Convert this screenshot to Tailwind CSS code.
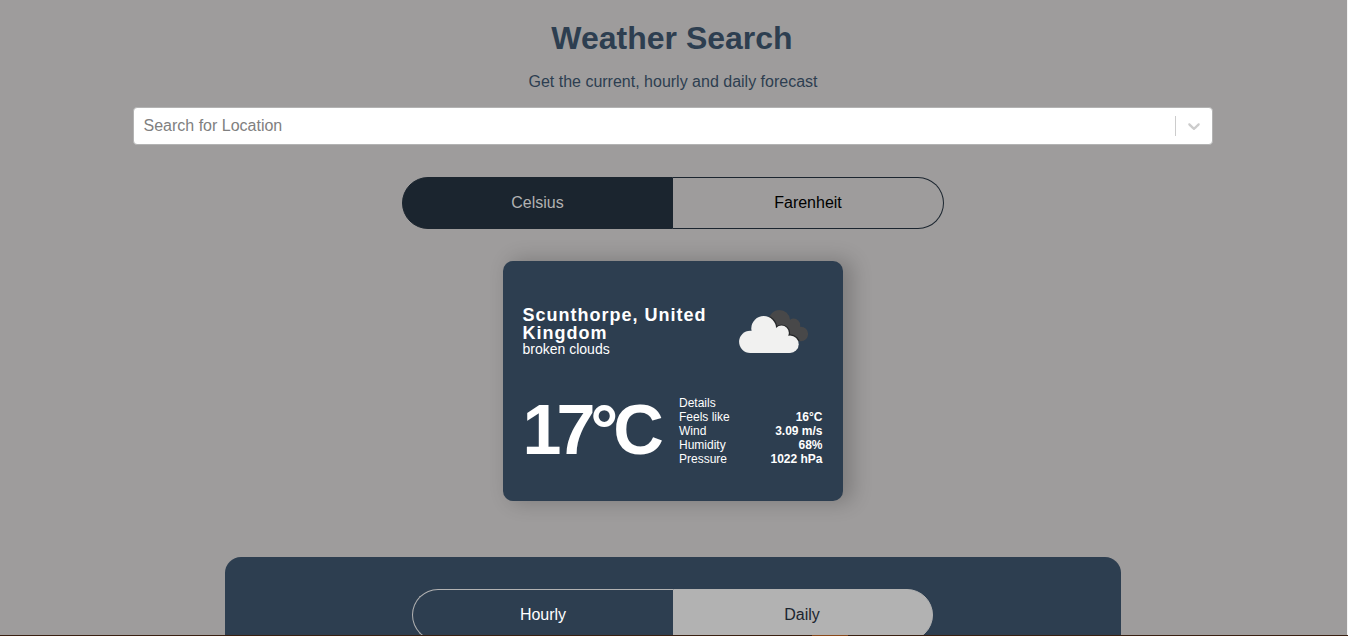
<!DOCTYPE html>
<html lang="en">
<head>
<meta charset="utf-8">
<title>Weather Search</title>
<script src="https://cdn.jsdelivr.net/npm/@tailwindcss/browser@4"></script>
</head>
<body class="relative h-[636px] overflow-hidden bg-[#9e9c9c] font-['Liberation_Sans',Arial,sans-serif] text-base text-black">
<main class="flex h-[635px] w-[1346px] flex-col items-center overflow-hidden">
  <h1 class="mt-[20px] h-[37px] pr-[2px] text-[32px] leading-[37px] font-bold text-[#2d3e50]">Weather Search</h1>
  <p class="mt-[16px] h-[18px] leading-[18px] text-[#2d3e50]">Get the current, hourly and daily forecast</p>
  <div class="mt-[16px] flex h-[38px] w-[1080px] shrink-0 items-center rounded-[4px] border border-[#b3b3b3] bg-white">
    <span class="ml-[9.5px] flex-1 leading-[18px] text-[#808080]">Search for Location</span>
    <span class="h-5 w-px bg-[#cccccc]"></span>
    <svg class="mx-2 h-5 w-5" viewBox="0 0 20 20" fill="#cccccc"><path d="M4.516 7.548c0.436-0.446 1.043-0.481 1.576 0l3.908 3.747 3.908-3.747c0.533-0.481 1.141-0.446 1.574 0 0.436 0.445 0.408 1.197 0 1.615-0.406 0.418-4.695 4.502-4.695 4.502-0.217 0.223-0.502 0.335-0.787 0.335s-0.57-0.112-0.789-0.335c0 0-4.287-4.084-4.695-4.502s-0.436-1.17 0-1.615z"/></svg>
  </div>
  <div class="mt-8 flex h-[52px] w-[542px] shrink-0 text-center leading-[50px]">
    <button class="w-[271px] rounded-l-[26px] border border-[#1b252f] bg-[#1b252f] text-[#b2b2b2]">Celsius</button>
    <button class="w-[271px] rounded-r-[26px] border border-l-0 border-[#1b252f]">Farenheit</button>
  </div>
  <section class="mt-8 h-[240px] w-[340px] shrink-0 rounded-[10px] bg-[#2d3e50] pr-[20.5px] pl-[19.5px] text-white shadow-[8px_0px_20px_2px_rgba(0,0,0,0.2)]">
    <div class="flex h-[123px] justify-between">
      <div class="w-[200px] pt-[45px]">
        <p class="text-[18px] leading-[18px] font-bold tracking-[1px]">Scunthorpe, United Kingdom</p>
        <p class="text-[14px] leading-[14px]">broken clouds</p>
      </div>
      <svg class="mt-[41px] mr-[8.5px] h-[60px] w-[80px]" viewBox="734 302 80 60">
        <defs>
          <clipPath id="rear"><circle cx="779.5" cy="320.5" r="10.6"/><circle cx="793.6" cy="325.2" r="6.6"/><circle cx="800.8" cy="334" r="7.3"/><path d="M779 320h15l7 20h-6l-18-8z"/></clipPath>
        </defs>
        <g clip-path="url(#rear)">
          <path fill="#484849" d="M765 308h46v40h-46z"/>
          <g fill="#242628"><circle cx="763.7" cy="328.4" r="13.6"/><circle cx="781.5" cy="333" r="8.6"/><circle cx="790" cy="344.2" r="10"/></g>
        </g>
        <g fill="#f1f1f0"><circle cx="763.7" cy="328.4" r="12.4"/><circle cx="781.5" cy="333" r="7.4"/><circle cx="790" cy="344.2" r="8.7"/><circle cx="750.2" cy="341.8" r="11.1"/><path d="M751 331h32l7 21.9h-40z"/></g>
      </svg>
    </div>
    <div class="flex justify-between">
      <p class="mt-[6px] h-[80px] text-[70px] leading-[80px] font-bold tracking-[-5px]">17°C</p>
      <div class="mt-[12px] w-[143.5px] text-[12px] leading-[14px]">
        <p>Details</p>
        <div class="flex justify-between"><span>Feels like</span><b>16°C</b></div>
        <div class="flex justify-between"><span>Wind</span><b>3.09 m/s</b></div>
        <div class="flex justify-between"><span>Humidity</span><b>68%</b></div>
        <div class="flex justify-between"><span>Pressure</span><b>1022 hPa</b></div>
      </div>
    </div>
  </section>
  <section class="mt-[56px] flex h-[300px] w-[896px] shrink-0 rounded-[16px] bg-[#2d3e50] pt-8 pl-[187px]">
    <div class="flex h-[52px] w-[521px] text-center leading-[50px]">
      <button class="w-[261px] rounded-l-[26px] border border-r-0 border-[#b2b2b2] text-white">Hourly</button>
      <button class="w-[260px] rounded-r-[26px] border border-[#b2b2b2] bg-[#b2b2b2] pr-[2px] text-[#1b252f]">Daily</button>
    </div>
  </section>
</main>
<div class="absolute top-0 right-0 h-full w-px bg-[#f4f4f4]"></div>
<div class="absolute bottom-0 left-0 flex h-px w-full bg-[#3a2010] pl-[812px]"><span class="h-px w-9 bg-[#8a4818]"></span></div>
</body>
</html>
